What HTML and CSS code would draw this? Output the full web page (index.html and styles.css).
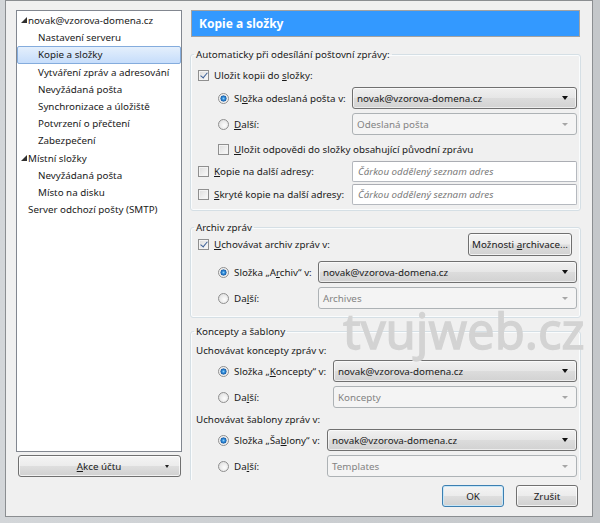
FILE: index.html
```html
<!DOCTYPE html>
<html lang="cs">
<head>
  <meta charset="UTF-8" />
  <title>Nastavení účtu</title>
  <link rel="stylesheet" href="styles.css">
</head>
<body>
  <div class="dialog">
    <div class="sidebar">
      <div class="tree">
        <div class="item top"><span class="twisty"></span>novak@vzorova-domena.cz</div>
        <div class="item child">Nastavení serveru</div>
        <div class="item child selected">Kopie a složky</div>
        <div class="item child">Vytváření zpráv a adresování</div>
        <div class="item child">Nevyžádaná pošta</div>
        <div class="item child">Synchronizace a úložiště</div>
        <div class="item child">Potvrzení o přečtení</div>
        <div class="item child">Zabezpečení</div>
        <div class="item top"><span class="twisty"></span>Místní složky</div>
        <div class="item child">Nevyžádaná pošta</div>
        <div class="item child">Místo na disku</div>
        <div class="item top plain">Server odchozí pošty (SMTP)</div>
      </div>
      <button class="btn btn-menu"><span class="label"><u>A</u>kce účtu</span><span class="caret"></span></button>
    </div>

    <div class="main">
      <div class="pane-title">Kopie a složky</div>
      <div class="pane">
        <fieldset class="group g-sent">
          <legend>Automaticky při odesílání poštovní zprávy:</legend>
          <div class="row line mt3"><span class="check on"></span><span>Uložit kopii do <u>s</u>ložky:</span></div>
          <div class="row mt2 indent">
            <span class="opt w134"><span class="radio on"></span><span>Sl<u>o</u>žka odeslaná pošta v:</span></span>
            <div class="select">novak@vzorova-domena.cz<span class="arrow"></span></div>
          </div>
          <div class="row mt4 indent">
            <span class="opt w134"><span class="radio"></span><span><u>D</u>alší:</span></span>
            <div class="select disabled">Odeslaná pošta<span class="arrow"></span></div>
          </div>
          <div class="row line mt4 indent"><span class="check"></span><span><u>U</u>ložit odpovědi do složky obsahující původní zprávu</span></div>
          <div class="row field mt2">
            <span class="opt w154"><span class="check"></span><span><u>K</u>opie na další adresy:</span></span>
            <div class="textbox">Čárkou oddělený seznam adres</div>
          </div>
          <div class="row field mt2">
            <span class="opt w154"><span class="check"></span><span><u>S</u>kryté kopie na další adresy:</span></span>
            <div class="textbox">Čárkou oddělený seznam adres</div>
          </div>
        </fieldset>

        <fieldset class="group g-archive">
          <legend>Archiv zpráv</legend>
          <div class="row tall mtn2">
            <span class="check on"></span><span><u>U</u>chovávat archiv zpráv v:</span>
            <button class="btn btn-options">Možnosti <u>a</u>rchivace...</button>
          </div>
          <div class="row mt5 indent">
            <span class="opt w100"><span class="radio on"></span><span>Složka „A<u>r</u>chiv“ v:</span></span>
            <div class="select">novak@vzorova-domena.cz<span class="arrow"></span></div>
          </div>
          <div class="row mt4 indent">
            <span class="opt w100"><span class="radio"></span><span>Da<u>l</u>ší:</span></span>
            <div class="select disabled">Archives<span class="arrow"></span></div>
          </div>
        </fieldset>

        <fieldset class="group g-drafts">
          <legend>Koncepty a šablony</legend>
          <div class="row caption mt2">Uchovávat koncepty zpráv v:</div>
          <div class="row mt1 indent">
            <span class="opt w115"><span class="radio on"></span><span>Složka „<u>K</u>oncepty“ v:</span></span>
            <div class="select">novak@vzorova-domena.cz<span class="arrow"></span></div>
          </div>
          <div class="row mt4 indent">
            <span class="opt w115"><span class="radio"></span><span>Da<u>l</u>ší:</span></span>
            <div class="select disabled">Koncepty<span class="arrow"></span></div>
          </div>
          <div class="row caption mt2">Uchovávat šablony zpráv v:</div>
          <div class="row mt1 indent">
            <span class="opt w109"><span class="radio on"></span><span>Složka „Ša<u>b</u>lony“ v:</span></span>
            <div class="select">novak@vzorova-domena.cz<span class="arrow"></span></div>
          </div>
          <div class="row mt4 indent">
            <span class="opt w109"><span class="radio"></span><span>Da<u>l</u>ší:</span></span>
            <div class="select disabled">Templates<span class="arrow"></span></div>
          </div>
        </fieldset>
      </div>
      <div class="actions">
        <button class="btn btn-default">OK</button>
        <button class="btn">Zrušit</button>
      </div>
    </div>

    <div class="watermark">tvujweb.cz</div>
  </div>
</body>
</html>
```

FILE: styles.css
```css
* {
  box-sizing: border-box;
}
body {
  margin: 0;
  width: 600px;
  height: 523px;
  padding: 0 7px 6px 5px;
  background: linear-gradient(to right, #d3d6d9, #c4c7ca);
  font-family: "Noto Sans", "Open Sans", sans-serif;
  font-size: 9.8px;
  line-height: 15px;
  color: #1a1a1a;
  overflow: hidden;
}
u {
  text-decoration-thickness: 1px;
  text-underline-offset: 1px;
}
.dialog {
  position: relative;
  height: 100%;
  border: 1px solid #8b8e91;
  background: #f0f0f0;
  display: grid;
  grid-template-columns: 166px 391px;
  column-gap: 8px;
  align-items: start;
  padding: 9px 0 0 10px;
}

/* left tree */
.sidebar {
  display: flex;
  flex-direction: column;
}
.tree {
  height: 442px;
  padding-top: 1px;
  background: #fff;
  border: 1px solid #828790;
}
.item {
  height: 17.2px;
  line-height: 17px;
  white-space: nowrap;
}
.item.top {
  padding-left: 4px;
}
.item.plain {
  padding-left: 11px;
}
.item.child {
  padding-left: 21px;
}
.item.selected {
  padding-left: 20px;
  line-height: 15px;
  background: linear-gradient(#e4effc, #c6ddfb);
  border: 1px solid #84acdd;
  border-radius: 2px;
}
.twisty {
  display: inline-block;
  width: 0;
  height: 0;
  margin: 0 1px 1px 0;
  border-left: 6px solid transparent;
  border-bottom: 6px solid #303030;
}
.btn {
  height: 22px;
  padding: 0;
  border: 1px solid #707070;
  border-radius: 3px;
  background: linear-gradient(#f4f4f4, #ececec 48%, #dedede 52%, #d1d1d1);
  box-shadow: inset 0 0 0 1px rgba(255, 255, 255, 0.7);
  font: inherit;
  color: #1a1a1a;
}
.btn-menu {
  margin: 3px 1px 0 2px;
  display: flex;
  align-items: center;
  padding: 0 11px 0 14px;
}
.btn-menu .label {
  flex: 1;
  text-align: center;
}
.caret {
  width: 0;
  height: 0;
  border-top: 3px solid #222;
  border-left: 2px solid transparent;
  border-right: 2px solid transparent;
}

/* right pane */
.main {
  display: flex;
  flex-direction: column;
}
.pane-title {
  height: 27px;
  margin: 0 1px;
  padding-left: 7px;
  background: #3399ff;
  border: 1px solid #a2a2a2;
  color: #fff;
  font-size: 12px;
  font-weight: bold;
  line-height: 25px;
}
.pane {
  height: 443px;
  overflow: hidden;
}
.group {
  margin: 10px 0 0;
  min-width: 0;
  padding: 0 3px 5px 7px;
  border: 1px solid #d5dfe5;
  border-radius: 3px;
  box-shadow: inset 0 0 0 1px #fafcfd;
}
.group legend {
  margin-left: -4px;
  padding: 0 2px;
  line-height: 15px;
}
.g-archive {
  margin-top: 9px;
  padding-bottom: 8px;
}
.g-drafts {
  margin-top: 6px;
  padding-bottom: 20px;
}
.row {
  display: flex;
  align-items: center;
  height: 22px;
  white-space: nowrap;
}
.row.line {
  height: 20px;
}
.row.field {
  height: 21px;
}
.row.tall {
  height: 23px;
}
.row.caption {
  height: 18px;
  margin-left: -2px;
}
.row.indent {
  padding-left: 20px;
}
.mtn2 { margin-top: -2px; }
.mt1 { margin-top: 1px; }
.mt2 { margin-top: 2px; }
.mt3 { margin-top: 3px; }
.mt4 { margin-top: 4px; }
.mt5 { margin-top: 5px; }

.opt {
  display: flex;
  align-items: center;
  flex: none;
}
.w100 { width: 100px; }
.w109 { width: 109px; }
.w115 { width: 115px; }
.w134 { width: 134px; }
.w154 { width: 154px; }

.check {
  flex: none;
  position: relative;
  width: 11px;
  height: 11px;
  margin-right: 5px;
  border: 1px solid #8f8f8f;
  background: linear-gradient(135deg, #dcdcdc, #fbfbfb);
  box-shadow: inset 0 0 0 1px #f3f3f3;
}
.check.on::after {
  content: "";
  position: absolute;
  left: 3px;
  top: 0;
  width: 3px;
  height: 6px;
  border: solid #3b5f96;
  border-width: 0 1.5px 1.5px 0;
  transform: rotate(40deg);
}
.radio {
  flex: none;
  width: 11px;
  height: 11px;
  margin-right: 5px;
  border: 1px solid #8f8f8f;
  border-radius: 50%;
  background: radial-gradient(circle at 60% 60%, #fdfdfd, #d9d9d9);
}
.radio.on {
  background: radial-gradient(circle, #8fd0f7 0, #2a86d6 1.6px, #195fa8 2.8px, #e8e8e8 3.3px, #fbfbfb 5px);
}
.select {
  flex: 1;
  height: 22px;
  display: flex;
  align-items: center;
  justify-content: space-between;
  padding-left: 4px;
  border: 1px solid #707070;
  border-radius: 3px;
  background: linear-gradient(#f0f0f0, #e6e6e6 50%, #dcdcdc 51%, #d2d2d2);
  box-shadow: inset 0 0 0 1px rgba(255, 255, 255, 0.6);
}
.select .arrow {
  margin-right: 8px;
  width: 0;
  height: 0;
  border-top: 4px solid #111;
  border-left: 3.5px solid transparent;
  border-right: 3.5px solid transparent;
}
.select.disabled {
  background: #f4f4f4;
  border-color: #adb2b5;
  box-shadow: none;
  color: #838383;
}
.select.disabled .arrow {
  border-top: 3px solid #a6a6a6;
  border-left-width: 3px;
  border-right-width: 3px;
}
.textbox {
  flex: 1;
  height: 21px;
  padding-left: 5px;
  line-height: 19px;
  background: #fff;
  border: 1px solid #b5b9bf;
  border-top-color: #abadb3;
  border-radius: 2px;
  color: #7b7b7b;
  font-style: italic;
}
.btn-options {
  margin: 0 5px 0 auto;
  width: 104px;
  height: 23px;
}
.actions {
  display: flex;
  justify-content: flex-end;
  gap: 12px;
  margin-top: 5px;
  padding-right: 3px;
}
.actions .btn {
  width: 62px;
}
.btn-default {
  border-color: #3c7fb1;
  box-shadow: inset 0 0 0 1px #c8e7f8;
}
.watermark {
  position: absolute;
  left: 337px;
  top: 312px;
  font-family: "Noto Sans", sans-serif;
  font-size: 49px;
  line-height: 34px;
  color: #d3d3d3;
  -webkit-text-stroke: 1.3px #d3d3d3;
  pointer-events: none;
}
```
